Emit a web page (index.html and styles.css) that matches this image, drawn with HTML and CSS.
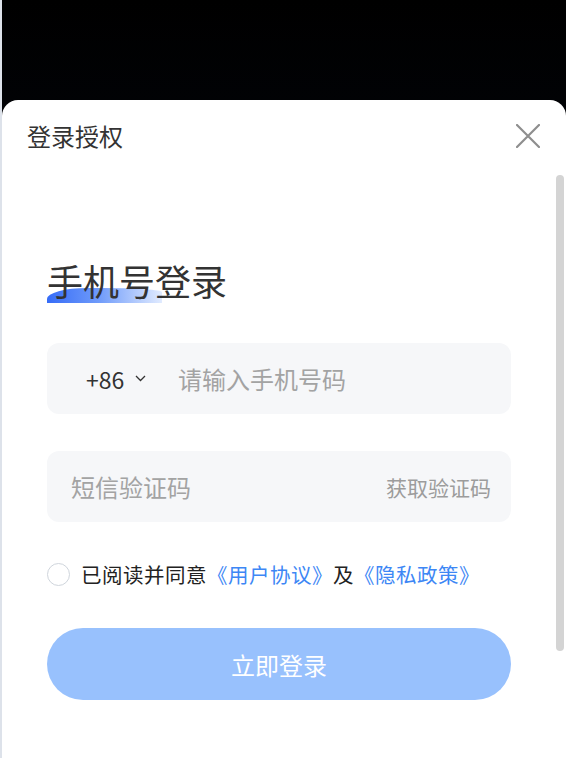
FILE: index.html
```html
<!DOCTYPE html>
<html lang="zh-CN">
<head>
    <meta charset="UTF-8">
    <meta name="viewport" content="width=device-width, initial-scale=1.0">
    <title>登录授权</title>
    <link rel="stylesheet" href="styles.css">
</head>
<body>

    <div class="backdrop"></div>

    <div class="sheet">
        <div class="sheet-head">
            <span class="sheet-title">登录授权</span>
            <svg class="close" width="24" height="24" viewBox="0 0 24 24">
                <path d="M1 1 L23 23 M23 1 L1 23" stroke="#8e8e8e" stroke-width="2.2" fill="none" stroke-linecap="round"/>
            </svg>
        </div>

        <div class="login">
            <h1 class="login-title">手机号登录</h1>

            <div class="field">
                <span class="area-code">+86
                    <svg width="11" height="7" viewBox="0 0 11 7">
                        <path d="M1 1 L5.5 5.5 L10 1" stroke="#333" stroke-width="1.3" fill="none"/>
                    </svg>
                </span>
                <span class="placeholder">请输入手机号码</span>
            </div>

            <div class="field code-field">
                <span class="placeholder">短信验证码</span>
                <span class="get-code">获取验证码</span>
            </div>

            <div class="agree">
                <span class="check"></span>
                <span>已阅读并同意<a href="#">《用户协议》</a>及<a href="#">《隐私政策》</a></span>
            </div>

            <button class="submit">立即登录</button>

            <div class="other">其他登录方式</div>
        </div>

        <div class="scroll-thumb"></div>
    </div>

</body>
</html>
```

FILE: styles.css
```css
html, body {
    margin: 0;
    height: 758px;
    overflow: hidden;
}
body {
    font-family: "Noto Sans CJK SC", "Noto Sans", sans-serif;
    border-left: 2px solid #dde2ea;
    background: linear-gradient(180deg, #000000 0%, #03060e 40%, #0a1222 100%);
    color: #333;
}
.backdrop {
    height: 100px;
}
.sheet {
    position: relative;
    background-color: #fff;
    border-radius: 16px 16px 0 0;
    height: 658px;
}
.sheet-head {
    display: flex;
    justify-content: space-between;
    align-items: center;
    height: 72px;
    padding: 0 26px 0 25px;
}
.sheet-title {
    font-size: 24px;
    line-height: 24px;
    color: #333;
}
.login {
    width: 464px;
    padding-left: 45px;
}
.login-title {
    position: relative;
    isolation: isolate;
    margin: 90px 0 0 0;
    font-size: 36px;
    font-weight: normal;
    line-height: 36px;
    color: #333;
}
.login-title::before {
    content: "";
    position: absolute;
    left: 0;
    top: 26px;
    width: 115px;
    height: 15px;
    border-top-left-radius: 40px 11px;
    border-top-right-radius: 60px 4px;
    background: linear-gradient(90deg, #366cf7 0%, #6f9bfa 45%, rgba(205, 222, 255, 0.6) 100%);
    z-index: -1;
}
.field {
    display: flex;
    align-items: center;
    height: 71px;
    margin-top: 45px;
    background-color: #f6f7f9;
    border-radius: 12px;
}
.area-code {
    display: flex;
    align-items: center;
    gap: 11px;
    padding-left: 39px;
    width: 92px;
    font-size: 23px;
    color: #333;
}
.placeholder {
    font-size: 24px;
    color: #a3a3a3;
}
.code-field {
    justify-content: space-between;
    margin-top: 37px;
    padding: 0 20px 0 24px;
}
.get-code {
    font-size: 21px;
    color: #9c9c9c;
}
.agree {
    display: flex;
    align-items: center;
    gap: 11px;
    margin-top: 38px;
    font-size: 20.5px;
    letter-spacing: 0.5px;
    line-height: 28px;
    color: #222;
}
.agree a {
    color: #3d87f5;
    text-decoration: none;
}
.check {
    width: 21px;
    height: 21px;
    border: 1px solid #cfd5dc;
    border-radius: 50%;
}
.submit {
    display: block;
    width: 100%;
    height: 72px;
    margin-top: 40px;
    border: none;
    border-radius: 36px;
    background-color: #98c1fd;
    color: #fff;
    font-family: inherit;
    font-size: 24px;
}
.other {
    margin-top: 55px;
    text-align: center;
    font-size: 16px;
    color: #d0d0d0;
}
.scroll-thumb {
    position: absolute;
    right: 2px;
    top: 75px;
    width: 8px;
    height: 476px;
    border-radius: 4px;
    background-color: #d4d4d4;
}
```
